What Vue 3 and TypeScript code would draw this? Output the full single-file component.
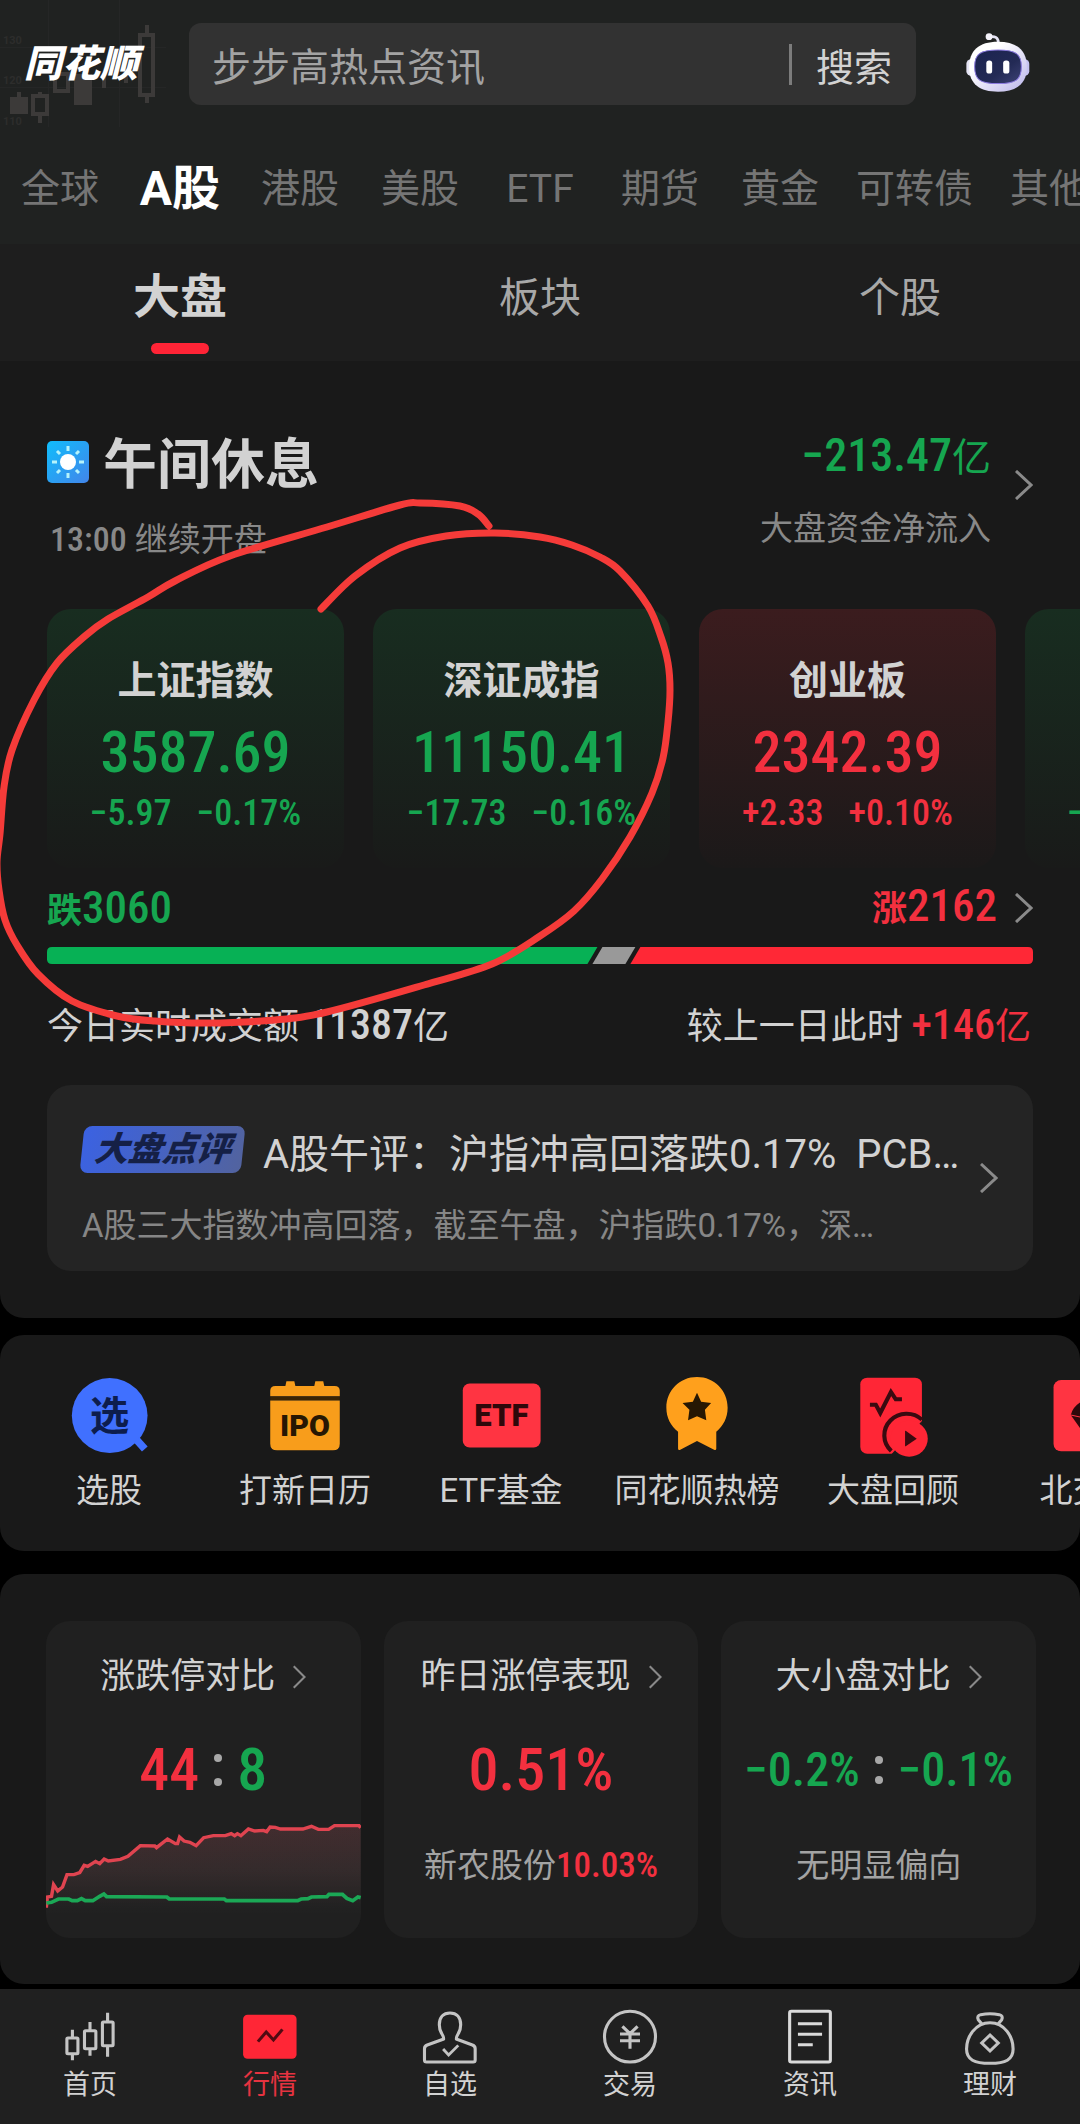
<script setup lang="ts">
type Tone = 'up' | 'down'

interface IndexCard {
  name: string
  value: string
  change: string
  percent: string
  tone: Tone
}

const markets: string[] = ['全球', 'A股', '港股', '美股', 'ETF', '期货', '黄金', '可转债', '其他']
const views: string[] = ['大盘', '板块', '个股']

const indexes: IndexCard[] = [
  { name: '上证指数', value: '3587.69', change: '−5.97', percent: '−0.17%', tone: 'down' },
  { name: '深证成指', value: '11150.41', change: '−17.73', percent: '−0.16%', tone: 'down' },
  { name: '创业板', value: '2342.39', change: '+2.33', percent: '+0.10%', tone: 'up' },
  { name: '', value: '', change: '−', percent: '', tone: 'down' },
]

const shortcuts = [
  { label: '选股', box: '194 139 244 244' },
  { label: '打新日历', box: '767 139 244 244' },
  { label: 'ETF基金', box: '1334 139 244 244' },
  { label: '同花顺热榜', box: '337 139 244 252' },
  { label: '大盘回顾', box: '906 139 244 252' },
  { label: '北交所', box: '1475 139 244 252' },
]

const navItems = [
  { label: '首页', box: '174 145 174 180' },
  { label: '行情', box: '697 145 174 180' },
  { label: '自选', box: '1220 145 174 180' },
  { label: '交易', box: '174 145 174 180' },
  { label: '资讯', box: '697 145 174 180' },
  { label: '理财', box: '1220 145 174 180' },
]

const upLine =
  '135,1012 138,980 150,978 156,943 168,962 182,950 195,913 215,913 232,907 245,885 255,888 278,873 290,880 303,866 315,872 350,867 372,858 408,826 450,827 455,832 487,806 510,820 516,820 522,800 535,812 552,816 570,826 592,802 620,796 655,796 672,790 682,796 690,790 700,796 722,776 740,782 765,780 775,784 785,770 800,771 815,776 880,776 905,768 925,777 955,777 972,766 1043,766 1048,772'
const downLine =
  '135,998 150,996 170,986 200,986 210,991 225,991 237,985 248,991 270,991 290,978 302,971 310,979 485,980 492,986 652,986 658,991 865,991 875,986 895,985 905,980 950,979 956,972 995,972 1008,984 1025,991 1040,980 1048,982'

type Point = [number, number]

/* Hand-drawn stroke around the first two indexes. */
const strokePoints: Point[] = [
  [321, 609], [355, 576], [400, 548], [446, 536], [495, 533], [540, 537], [572, 545],
  [600, 557], [620, 571], [648, 606], [661, 637], [668, 663], [670, 690], [668, 722],
  [663, 758], [652, 793], [630, 837], [602, 879], [574, 911], [540, 936], [492, 964], [424, 985],
  [327, 1012], [275, 1020], [207, 1023], [155, 1021], [117, 1016], [72, 1001], [38, 974],
  [17, 945], [5, 920], [-1, 890], [-3, 862], [0, 834], [4, 787], [12, 750], [34, 700], [57, 663],
  [85, 636], [108, 619], [148, 597], [175, 581], [230, 556], [327, 527], [400, 505], [420, 503],
  [460, 506], [478, 514], [489, 526],
]

function smooth(points: Point[]): string {
  let d = `M${points[0][0]} ${points[0][1]}`
  for (let i = 0; i < points.length - 1; i++) {
    const a = points[Math.max(i - 1, 0)]
    const b = points[i]
    const c = points[i + 1]
    const e = points[Math.min(i + 2, points.length - 1)]
    d += `C${b[0] + (c[0] - a[0]) / 6} ${b[1] + (c[1] - a[1]) / 6} ${c[0] - (e[0] - b[0]) / 6} ${c[1] - (e[1] - b[1]) / 6} ${c[0]} ${c[1]}`
  }
  return d
}

const strokePath = smooth(strokePoints)
</script>

<template>
  <div class="page">
    <header class="header">
      <div class="topbar">
        <div class="brand">
          <svg class="brand-art" viewBox="0 0 170 128" aria-hidden="true">
            <g stroke="#252626" stroke-width="1">
              <path d="M48.500 0V127M119.500 0V127M0 47.500H166M0 87.500H166" />
            </g>
            <g fill="#2d2d2c" font-size="11" font-weight="700">
              <text x="3" y="44">130</text>
              <text x="3" y="84">120</text>
              <text x="3" y="125">110</text>
            </g>
            <g fill="#3c3a39">
              <path d="M10 97h7v-5h4v5h7v17H10zM74 74h18v31H74zM102 74h4v14h-4zM124 74h4v9h-4z" />
            </g>
            <g fill="none" stroke="#3c3a39" stroke-width="4">
              <path d="M33 96h14v18H33zM40 92v4M40 114v9M55 74h13v17H55zM140 35h13v60h-13zM147 25v10M147 95v8" />
            </g>
          </svg>
          <span class="brand-name">同花顺</span>
        </div>
        <form class="search" @submit.prevent>
          <input class="search-input" type="search" aria-label="搜索资讯" placeholder="步步高热点资讯" />
          <button class="search-btn" type="submit">搜索</button>
        </form>
        <button class="robot" type="button" aria-label="智能助手">
          <svg viewBox="1236 92 192 188" preserveAspectRatio="none">
            <defs>
              <linearGradient id="shell" x1="0" y1="0" x2="1" y2="1">
                <stop offset="0.300" stop-color="#ffffff" />
                <stop offset="1" stop-color="#b9b4ea" />
              </linearGradient>
              <linearGradient id="visor" x1="0" y1="0" x2="1" y2="1">
                <stop offset="0" stop-color="#1b2350" />
                <stop offset="0.600" stop-color="#232a55" />
                <stop offset="1" stop-color="#3d4276" />
              </linearGradient>
            </defs>
            <path d="M1306 110Q1332 104 1333 126" fill="none" stroke="#e6e4f5" stroke-width="8" />
            <circle cx="1306" cy="109" r="10" fill="#f4f3fb" />
            <rect x="1240" y="176" width="30" height="50" rx="14" fill="#e4e4f4" />
            <rect x="1394" y="176" width="29" height="50" rx="14" fill="#c5c2f0" />
            <path d="M1332 124C1388 124 1416 150 1416 200C1416 250 1385 273 1332 273C1279 273 1248 250 1248 200C1248 150 1276 124 1332 124Z" fill="url(#shell)" />
            <path d="M1332 149C1384 149 1400 160 1400 198C1400 238 1384 249 1332 249C1280 249 1264 238 1264 198C1264 160 1280 149 1332 149Z" fill="url(#visor)" stroke="#8c7be0" stroke-width="3" />
            <rect x="1298" y="180" width="17" height="39" rx="8" fill="#fff" />
            <rect x="1347" y="180" width="18" height="39" rx="8" fill="#fff" />
          </svg>
        </button>
      </div>
      <nav class="markets" aria-label="市场">
        <a v-for="m in markets" :key="m" href="#" class="market" :class="{ active: m === 'A股' }">{{ m }}</a>
      </nav>
    </header>

    <nav class="views" aria-label="视图">
      <a v-for="v in views" :key="v" href="#" class="view" :class="{ active: v === '大盘' }">{{ v }}</a>
    </nav>

    <main>
      <section class="panel overview">
        <div class="status">
          <div class="status-left">
            <h1 class="status-title">
              <svg class="sun" viewBox="0 0 42 42" aria-hidden="true">
                <defs>
                  <linearGradient id="sky" x1="0" y1="0" x2="1" y2="1">
                    <stop offset="0" stop-color="#10bdfb" />
                    <stop offset="1" stop-color="#4285ea" />
                  </linearGradient>
                </defs>
                <rect width="42" height="42" rx="5" fill="url(#sky)" />
                <circle cx="21" cy="21" r="8" fill="#fff" />
                <path d="M21 5v5M21 32v5M5 21h5M32 21h5M10 10l3 3M29 29l3 3M32 10l-3 3M13 29l-3 3" stroke="#b5f3fb" stroke-width="3" />
              </svg>
              <span>午间休息</span>
            </h1>
            <p class="status-sub"><span class="num">13:00</span> 继续开盘</p>
          </div>
          <a class="flow" href="#">
            <span class="flow-text">
              <span class="flow-value down"><b class="num">−213.47</b>亿</span>
              <span class="flow-label">大盘资金净流入</span>
            </span>
            <svg class="chevron" viewBox="0 0 18 30" aria-hidden="true"><path d="M1 1L16 15L1 29" /></svg>
          </a>
        </div>

        <div class="indexes">
          <a v-for="(card, i) in indexes" :key="i" href="#" class="index" :class="[card.tone, { partial: !card.name }]">
            <span class="index-name">{{ card.name }}</span>
            <span class="index-value num">{{ card.value }}</span>
            <span class="index-change num">
              <span>{{ card.change }}</span>
              <span v-if="card.percent">{{ card.percent }}</span>
            </span>
          </a>
        </div>

        <div class="breadth">
          <span class="down">跌<span class="num">3060</span></span>
          <a href="#" class="breadth-up up">
            <span>涨<span class="num">2162</span></span>
            <svg class="chevron" viewBox="0 0 18 30" aria-hidden="true"><path d="M1 1L16 15L1 29" /></svg>
          </a>
        </div>
        <svg class="ratio" viewBox="0 0 987 18" preserveAspectRatio="none" role="img" aria-label="涨跌家数">
          <path d="M5 0H551L541 18H5Q0 18 0 13V5Q0 0 5 0Z" fill="#07b155" />
          <path d="M556 0H589L579 18H546Z" fill="#999" />
          <path d="M594 0H982Q987 0 987 5V13Q987 18 982 18H584Z" fill="#ff2836" />
        </svg>

        <div class="turnover">
          <span>今日实时成交额 <b class="num">11387</b>亿</span>
          <span>较上一日此时 <span class="up"><b class="num">+146</b>亿</span></span>
        </div>

        <a class="review" href="#">
          <div class="review-body">
            <div class="review-head">
              <span class="tag">大盘点评</span>
              <span class="review-title">A股午评：沪指冲高回落跌0.17%&nbsp; PCB…</span>
            </div>
            <p class="review-sub">A股三大指数冲高回落，截至午盘，沪指跌0.17%，深…</p>
          </div>
          <svg class="chevron" viewBox="0 0 18 30" aria-hidden="true"><path d="M1 1L16 15L1 29" /></svg>
        </a>
      </section>

      <section class="panel shortcuts">
        <a v-for="(s, i) in shortcuts" :key="s.label" href="#" class="shortcut">
          <svg class="shortcut-icon" :viewBox="s.box" preserveAspectRatio="none" aria-hidden="true">
            <g v-if="i === 0">
              <ellipse cx="318" cy="254" rx="110" ry="109" fill="#4070ff" />
              <path d="M396 324L420 351" stroke="#4070ff" stroke-width="22" />
              <text x="318" y="297" font-size="114" font-weight="700" text-anchor="middle" fill="#0d1d4d">选</text>
            </g>
            <g v-else-if="i === 1">
              <path d="M788 198V182Q788 168 803 168H832L835 154H858L861 168H916L919 154H942L945 168H975Q990 168 990 182V198ZM788 210H990V336Q990 355 970 355H808Q788 355 788 336Z" fill="#f89d1b" />
              <path d="M788 204H990" stroke="#3a2404" stroke-width="9" />
              <text x="889" y="314" font-size="88" font-weight="900" text-anchor="middle" fill="#271703">IPO</text>
            </g>
            <g v-else-if="i === 2">
              <rect x="1345" y="161" width="226" height="186" rx="20" fill="#ff3442" />
              <text x="1457" y="285" font-size="90" font-weight="900" text-anchor="middle" fill="#2e080b">ETF</text>
            </g>
            <g v-else-if="i === 3">
              <path d="M459 142C510 142 548 183 548 234C548 265 535 288 515 306V357Q515 362 510 361L459 334L409 361Q404 362 404 357V306C383 288 370 265 370 234C370 183 408 142 459 142Z" fill="#ffa01c" />
              <path d="M459 189L471 216L500 220L482 240L486 272L459 260L433 272L437 240L417 220L447 216Z" fill="#261703" />
            </g>
            <g v-else-if="i === 4">
              <rect x="933" y="144" width="179" height="228" rx="20" fill="#ff2636" />
              <path d="M961 225H978L991 250L1022 187L1036 209H1054" fill="none" stroke="#3a0a10" stroke-width="12" />
              <path d="M1112 274V383H1026V371Z" fill="#191919" />
              <path d="M1112 270A62 62 0 0 0 1023 364" fill="none" stroke="#3a0a10" stroke-width="12" />
              <ellipse cx="1075" cy="327" rx="54" ry="54" fill="#ff2636" />
              <path d="M1063 304Q1063 302 1066 304L1097 327L1066 349Q1063 351 1063 348Z" fill="#3a0a10" />
            </g>
            <g v-else>
              <rect x="1494" y="151" width="210" height="214" rx="22" fill="#ff3442" />
              <path d="M1544 256Q1550 232 1572 218H1630L1652 256L1598 335Z" fill="#2e080b" />
              <path d="M1544 256L1572 262" stroke="#ff3442" stroke-width="3" />
            </g>
          </svg>
          <span class="shortcut-label">{{ s.label }}</span>
        </a>
      </section>

      <section class="panel stats">
        <a class="stat" href="#">
          <span class="stat-title">涨跌停对比<svg class="chevron small" viewBox="0 0 18 32" aria-hidden="true"><path d="M1 1L16 16L1 31" /></svg></span>
          <span class="stat-value num"><span class="up">44</span><i class="dots"></i><span class="down">8</span></span>
          <svg class="spark" viewBox="134 740 914 300" preserveAspectRatio="none" aria-hidden="true">
            <defs>
              <linearGradient id="upFill" gradientUnits="userSpaceOnUse" x1="0" y1="760" x2="0" y2="1010">
                <stop offset="0" stop-color="#f04050" stop-opacity="0.130" />
                <stop offset="1" stop-color="#f04050" stop-opacity="0" />
              </linearGradient>
              <linearGradient id="downFill" gradientUnits="userSpaceOnUse" x1="0" y1="900" x2="0" y2="1035">
                <stop offset="0" stop-color="#ffffff" stop-opacity="0.040" />
                <stop offset="1" stop-color="#ffffff" stop-opacity="0" />
              </linearGradient>
            </defs>
            <polygon :points="`${upLine} 1048,1010 134,1010`" fill="url(#upFill)" />
            <polygon :points="`${upLine} 1048,1035 134,1035`" fill="url(#downFill)" />
            <polyline :points="upLine" fill="none" stroke="#e04450" stroke-width="10" />
            <polyline :points="downLine" fill="none" stroke="#1ba856" stroke-width="11" />
          </svg>
        </a>
        <a class="stat" href="#">
          <span class="stat-title">昨日涨停表现<svg class="chevron small" viewBox="0 0 18 32" aria-hidden="true"><path d="M1 1L16 16L1 31" /></svg></span>
          <span class="stat-value num up">0.51%</span>
          <span class="stat-foot">新农股份<b class="num up">10.03%</b></span>
        </a>
        <a class="stat" href="#">
          <span class="stat-title">大小盘对比<svg class="chevron small" viewBox="0 0 18 32" aria-hidden="true"><path d="M1 1L16 16L1 31" /></svg></span>
          <span class="stat-value compact num down"><span>−0.2%</span><i class="dots"></i><span>−0.1%</span></span>
          <span class="stat-foot">无明显偏向</span>
        </a>
      </section>
    </main>

    <nav class="bottom" aria-label="主导航">
      <a v-for="(n, i) in navItems" :key="n.label" href="#" class="bottom-item" :class="{ active: i === 1 }">
        <svg class="bottom-icon" :viewBox="n.box" preserveAspectRatio="none" aria-hidden="true">
          <g v-if="i === 0" fill="none" stroke="#c4c4c4" stroke-width="9">
            <rect x="194" y="235" width="32" height="47" rx="3" />
            <rect x="245" y="213" width="33" height="54" rx="3" />
            <rect x="297" y="187" width="31" height="71" rx="3" />
            <path d="M210 210V235M210 282V302M261 187V213M261 267V288M312 159V187M312 258V291" />
          </g>
          <g v-else-if="i === 1">
            <rect x="706" y="165" width="155" height="132" rx="13" fill="#ff2636" />
            <path d="M749 246L773 217L794 241L820 209" fill="none" stroke="#520a12" stroke-width="9" />
          </g>
          <g v-else-if="i === 2" fill="none" stroke="#c4c4c4" stroke-width="9" stroke-linejoin="round">
            <path d="M1289 238C1289 224 1276 222 1276 195C1276 172 1288 160 1307 160C1326 160 1338 172 1338 195C1338 222 1325 224 1325 238L1372 256Q1380 259 1380 267V301Q1380 307 1374 307H1239Q1233 307 1233 301V267Q1233 259 1241 256Z" />
            <path d="M1294 237H1320" stroke="#202020" stroke-width="12" />
            <path d="M1287 268L1303 286L1331 257" stroke-width="8" stroke-linejoin="miter" />
          </g>
          <g v-else-if="i === 3" fill="none" stroke="#c4c4c4" stroke-width="9">
            <ellipse cx="261" cy="231" rx="74" ry="76" />
            <path d="M239 200L261 222L283 200M232 223H290M232 243H290M261 222V267" />
          </g>
          <g v-else-if="i === 4" fill="none" stroke="#dadada" stroke-width="9">
            <rect x="725" y="155" width="118" height="152" rx="5" />
            <path d="M749 192H819M749 224H819M749 255H792" />
          </g>
          <g v-else fill="none" stroke="#c4c4c4" stroke-width="9" stroke-linejoin="round">
            <path d="M1283 192L1273 180Q1268 168 1280 165Q1307 160 1334 165Q1346 168 1341 180L1331 192" />
            <path d="M1307 189C1350 189 1374 232 1374 268C1374 300 1352 311 1307 311C1262 311 1239 300 1239 268C1239 232 1264 189 1307 189Z" />
            <path d="M1307 226L1331 250L1307 274L1283 250Z" stroke-linejoin="miter" />
          </g>
        </svg>
        <span>{{ n.label }}</span>
      </a>
    </nav>

    <svg class="scribble" viewBox="0 0 1080 1060" aria-hidden="true">
      <path :d="strokePath" fill="none" stroke="#f53b39" stroke-width="7" stroke-linecap="round" />
    </svg>
  </div>
</template>

<style>
body {
  margin: 0;
  background: #000;
}
</style>

<style scoped>
.page {
  position: relative;
  min-height: 100vh;
  overflow: hidden;
  background: #000;
  color: #d2d2d2;
  font-family: Roboto, "Noto Sans CJK SC", sans-serif;
}
a {
  color: inherit;
  text-decoration: none;
}
h1,
p {
  margin: 0;
  font-weight: 400;
}
button,
input {
  border: 0;
  padding: 0;
  margin: 0;
  background: none;
  color: inherit;
  font-family: inherit;
}
.num {
  font-family: "Roboto Condensed", Roboto, "Noto Sans CJK SC", sans-serif;
  font-weight: 500;
}
.up {
  color: #f3303f;
}
.down {
  color: #16a650;
}
.chevron {
  width: 18px;
  height: 30px;
  flex: none;
  fill: none;
  stroke: #8a8a8a;
  stroke-width: 3;
}
.chevron.small {
  width: 13px;
  height: 24px;
  margin-left: 18px;
}

.header {
  background: #202221;
}
.topbar {
  display: flex;
  align-items: center;
  height: 128px;
}
.brand {
  position: relative;
  width: 189px;
  height: 128px;
  display: flex;
  align-items: center;
}
.brand-art {
  position: absolute;
  left: 0;
  top: 0;
  width: 170px;
  height: 128px;
}
.brand-name {
  position: relative;
  padding-left: 24px;
  color: #fff;
  font-size: 38px;
  font-weight: 900;
  font-style: italic;
  line-height: 48px;
}
.search {
  flex: 1;
  min-width: 0;
  height: 82px;
  display: flex;
  align-items: center;
  border-radius: 12px;
  background: #323232;
}
.search-input {
  flex: 1;
  min-width: 0;
  height: 82px;
  box-sizing: border-box;
  padding: 7px 0 0 23px;
  font-size: 39px;
  outline: none;
}
.search-input::placeholder {
  color: #a3a3a3;
  opacity: 1;
}
.search-btn {
  box-sizing: border-box;
  height: 41px;
  padding: 7px 24px 0;
  border-left: 3px solid #7c7c7c;
  font-size: 38px;
  line-height: 34px;
}
.robot {
  width: 66px;
  height: 63px;
  margin: 0 49px 3px;
}
.robot svg {
  display: block;
  width: 66px;
  height: 63px;
}
.markets {
  display: flex;
  align-items: center;
  height: 116px;
  box-sizing: border-box;
  padding-top: 6px;
  overflow: hidden;
}
.market {
  flex: none;
  box-sizing: border-box;
  min-width: 120px;
  padding: 0 16px;
  text-align: center;
  white-space: nowrap;
  font-size: 39px;
  line-height: 60px;
  color: #757575;
}
.market.active {
  font-size: 48px;
  font-weight: 700;
  color: #fff;
}

.views {
  display: flex;
  height: 117px;
  background: #1e1e1e;
}
.view {
  position: relative;
  flex: 1;
  text-align: center;
  font-size: 41px;
  line-height: 108px;
  color: #a8a8a8;
}
.view.active {
  font-size: 47px;
  font-weight: 700;
  line-height: 106px;
  color: #d2d2d2;
}
.view.active::after {
  content: "";
  position: absolute;
  left: 50%;
  bottom: 7px;
  width: 58px;
  height: 11px;
  margin-left: -29px;
  border-radius: 6px;
  background: #ff2436;
}

.panel {
  background: #191919;
  border-radius: 24px;
}
.overview {
  padding: 69px 47px 47px;
  border-radius: 0 0 24px 24px;
}
.status {
  display: flex;
  justify-content: space-between;
  height: 131px;
}
.status-title {
  display: flex;
  align-items: center;
  gap: 14px;
  font-size: 54px;
  font-weight: 700;
  line-height: 72px;
}
.sun {
  width: 42px;
  height: 42px;
  margin-bottom: 9px;
}
.status-sub {
  margin-top: 15px;
  padding-left: 3px;
  font-size: 33px;
  line-height: 44px;
  color: #888;
}
.status-sub .num {
  font-size: 34px;
}
.flow {
  display: flex;
  gap: 24px;
}
.flow .chevron {
  margin-top: 40px;
}
.flow-text {
  display: flex;
  flex-direction: column;
  align-items: flex-end;
  gap: 27px;
}
.flow-value {
  height: 50px;
  font-size: 39px;
  line-height: 50px;
}
.flow-value .num {
  font-size: 46px;
}
.flow-label {
  font-size: 33px;
  line-height: 44px;
  color: #888;
}

.indexes {
  display: flex;
  gap: 29px;
  margin: 48px -47px 0 0;
  overflow: hidden;
}
.index {
  flex: none;
  width: 297px;
  height: 259px;
  box-sizing: border-box;
  padding-top: 46px;
  display: flex;
  flex-direction: column;
  align-items: center;
  border-radius: 24px;
}
.index.down {
  background: linear-gradient(#182d20, #191a19);
}
.index.up {
  background: linear-gradient(#3b1c1e, #1b1919);
}
.index.partial {
  align-items: flex-start;
  padding-left: 42px;
}
.index-name {
  height: 52px;
  font-size: 39px;
  font-weight: 700;
  line-height: 52px;
  color: #d2d2d2;
}
.index-value {
  height: 72px;
  margin-top: 9px;
  font-size: 58px;
  line-height: 72px;
}
.index-change {
  display: flex;
  gap: 25px;
  margin-top: 3px;
  font-size: 36px;
  line-height: 44px;
}

.breadth {
  display: flex;
  justify-content: space-between;
  height: 50px;
  margin-top: 15px;
  font-size: 35px;
  font-weight: 700;
  line-height: 50px;
}
.breadth .num {
  font-size: 45px;
}
.breadth-up {
  display: flex;
  align-items: center;
  gap: 18px;
}
.ratio {
  display: block;
  width: 100%;
  height: 17px;
  margin-top: 14px;
}
.turnover {
  display: flex;
  justify-content: space-between;
  height: 50px;
  margin-top: 36px;
  padding-right: 2px;
  font-size: 36px;
  line-height: 50px;
}
.turnover .num {
  font-size: 42px;
}

.review {
  display: flex;
  align-items: center;
  margin-top: 35px;
  padding: 40px 35px 21px;
  border-radius: 24px;
  background: #242424;
}
.review .chevron {
  margin-bottom: 19px;
}
.review-body {
  flex: 1;
  min-width: 0;
}
.review-head {
  display: flex;
  align-items: flex-start;
  gap: 20px;
}
.tag {
  flex: none;
  width: 161px;
  height: 47px;
  margin-top: 1px;
  border-radius: 8px;
  transform: skewX(-6deg);
  background: linear-gradient(100deg, #3b62e2, #52639f);
  color: #152046;
  font-size: 34px;
  font-weight: 900;
  font-style: italic;
  line-height: 47px;
  text-align: center;
}
.review-title {
  font-size: 40px;
  line-height: 60px;
  white-space: nowrap;
}
.review-sub {
  margin-top: 17px;
  font-size: 33px;
  line-height: 48px;
  white-space: nowrap;
  color: #868686;
}

.shortcuts {
  display: flex;
  margin-top: 17px;
  padding: 41px 0 36px 11px;
  overflow: hidden;
}
.shortcut {
  flex: none;
  width: 196px;
  display: flex;
  flex-direction: column;
  align-items: center;
  gap: 7px;
}
.shortcut-icon {
  width: 84px;
  height: 84px;
}
.shortcut-label {
  font-size: 33px;
  line-height: 48px;
  white-space: nowrap;
}

.stats {
  display: flex;
  gap: 23px;
  margin-top: 23px;
  padding: 47px 44px 46px 46px;
}
.stat {
  flex: 1;
  min-width: 0;
  height: 317px;
  box-sizing: border-box;
  padding-top: 31px;
  display: flex;
  flex-direction: column;
  align-items: center;
  overflow: hidden;
  border-radius: 24px;
  background: #202020;
}
.stat-title {
  display: flex;
  align-items: center;
  font-size: 35px;
  line-height: 50px;
  white-space: nowrap;
}
.stat-value {
  display: flex;
  align-items: center;
  margin-top: 38px;
  font-size: 60px;
  line-height: 60px;
  white-space: nowrap;
}
.stat-value.compact {
  font-size: 48px;
}
.dots {
  display: flex;
  flex-direction: column;
  justify-content: space-between;
  width: 8px;
  height: 32px;
  margin: 0 15px;
}
.compact .dots {
  height: 28px;
}
.dots::before,
.dots::after {
  content: "";
  height: 8px;
  border-radius: 4px;
  background: #a8a8a8;
}
.stat-foot {
  margin-top: 44px;
  font-size: 33px;
  line-height: 44px;
  white-space: nowrap;
  color: #a3a3a3;
}
.stat-foot .num {
  font-size: 35px;
}
.spark {
  width: 100%;
  height: 100px;
  margin-top: 17px;
}

.bottom {
  display: flex;
  margin-top: 5px;
  padding: 19px 0 22px;
  background: #202020;
}
.bottom-item {
  flex: 1;
  display: flex;
  flex-direction: column;
  align-items: center;
  font-size: 27px;
  line-height: 34px;
}
.bottom-item.active {
  color: #e63340;
}
.bottom-icon {
  width: 60px;
  height: 60px;
}

.scribble {
  position: absolute;
  left: 0;
  top: 0;
  width: 100%;
  pointer-events: none;
}
</style>
